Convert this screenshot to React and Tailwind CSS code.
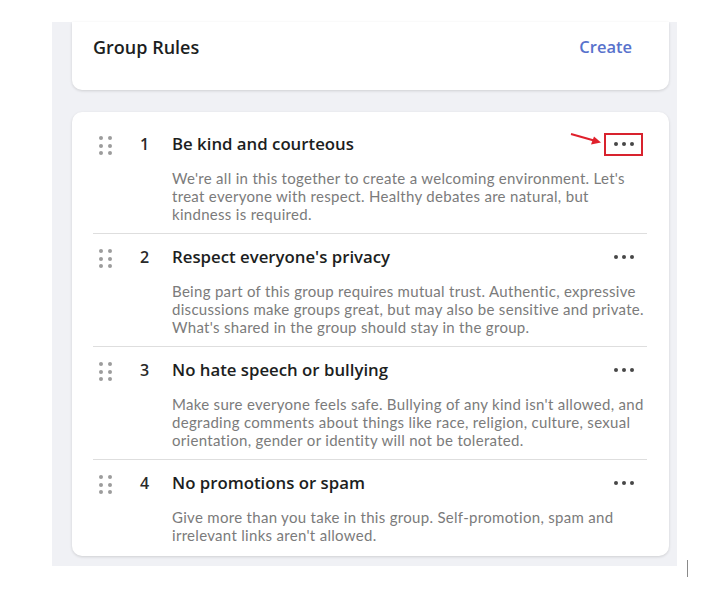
import React from 'react'

const rules = [
  {
    n: 1,
    title: 'Be kind and courteous',
    lines: [
      "We're all in this together to create a welcoming environment. Let's",
      'treat everyone with respect. Healthy debates are natural, but',
      'kindness is required.',
    ],
    marked: true,
  },
  {
    n: 2,
    title: "Respect everyone's privacy",
    lines: [
      'Being part of this group requires mutual trust. Authentic, expressive',
      'discussions make groups great, but may also be sensitive and private.',
      "What's shared in the group should stay in the group.",
    ],
  },
  {
    n: 3,
    title: 'No hate speech or bullying',
    lines: [
      "Make sure everyone feels safe. Bullying of any kind isn't allowed, and",
      'degrading comments about things like race, religion, culture, sexual',
      'orientation, gender or identity will not be tolerated.',
    ],
  },
  {
    n: 4,
    title: 'No promotions or spam',
    lines: [
      'Give more than you take in this group. Self-promotion, spam and',
      "irrelevant links aren't allowed.",
    ],
  },
]

const DragHandle = () => (
  <div className="grid grid-cols-2 gap-x-[5px] gap-y-[3.5px]">
    {[0, 1, 2, 3, 4, 5].map((i) => (
      <span key={i} className="w-[4px] h-[4px] rounded-full bg-[#9c9c9c]" />
    ))}
  </div>
)

const MoreButton = ({marked}) => (
  <div className="relative">
    {marked && (
      <svg
        className="absolute left-[-34px] top-[-1px]"
        width="32"
        height="14"
        viewBox="0 0 32 14"
      >
        <line x1="1" y1="2" x2="24" y2="8.5" stroke="#e0202c" strokeWidth="2" />
        <polygon points="31,10.5 21,12.5 24,4.5" fill="#e0202c" />
      </svg>
    )}
    <button
      className={`w-[39px] h-[23px] flex items-center justify-center gap-[4px] border-2 ${
        marked ? 'border-[#d8232e]' : 'border-transparent'
      }`}
    >
      <span className="w-[4px] h-[4px] rounded-full bg-[#474747]" />
      <span className="w-[4px] h-[4px] rounded-full bg-[#474747]" />
      <span className="w-[4px] h-[4px] rounded-full bg-[#474747]" />
    </button>
  </div>
)

const Rule = ({rule, last}) => (
  <div className={`flex items-start pt-[11px] ${last ? 'pb-[12px]' : 'pb-[10px] border-b border-[#dedede]'}`}>
    <div className="w-[47px] shrink-0 pl-[6px] h-[24px] flex items-center pt-[3px]">
      <DragHandle />
    </div>
    <div className="w-[32px] shrink-0 h-[24px] leading-[24px] text-[16px] font-semibold text-[#2a2a2a]">{rule.n}</div>
    <div className="flex-1 min-w-0">
      <h3 className="h-[24px] leading-[24px] text-[16.8px] font-semibold text-[#1c1e21]">{rule.title}</h3>
      <p
        className="mt-[13px] text-[15px] tracking-[0.3px] leading-[18px] text-[#7b7b7b]"
        style={{fontFamily: 'Lato, "Open Sans", sans-serif'}}
      >
        {rule.lines.map((l, i) => (
          <span key={i} className="block whitespace-nowrap">{l}</span>
        ))}
      </p>
    </div>
    <div className="shrink-0 mr-[4px] mt-[0.5px]">
      <MoreButton marked={rule.marked} />
    </div>
  </div>
)

export default function App() {
  return (
    <div className="w-[720px] h-[609px] bg-white flex items-start pt-[22px] pl-[52px]" style={{fontFamily: '"Open Sans", sans-serif'}}>
      <div className="w-[625px] bg-[#f0f1f5] pl-[20px] pr-[8px] pb-[10px]">
        <div className="h-[68px] bg-white rounded-b-[10px] shadow-[0_1px_3px_rgba(0,0,0,0.14)] flex items-start justify-between pl-[21px] pr-[37px] pt-[12px]">
          <h2 className="text-[18px] leading-[26px] font-semibold text-[#1c1e21]">Group Rules</h2>
          <button className="text-[16.5px] leading-[26px] font-semibold text-[#5872cc]">Create</button>
        </div>
        <div className="mt-[22px] bg-white rounded-[10px] shadow-[0_1px_3px_rgba(0,0,0,0.14)] pt-[9px] pl-[21px] pr-[22px]">
          {rules.map((r, i) => (
            <Rule key={r.n} rule={r} last={i === rules.length - 1} />
          ))}
        </div>
      </div>
      <div className="w-px h-[17px] bg-[#8a8a8a] mt-[538px] ml-[10px]" />
    </div>
  )
}
